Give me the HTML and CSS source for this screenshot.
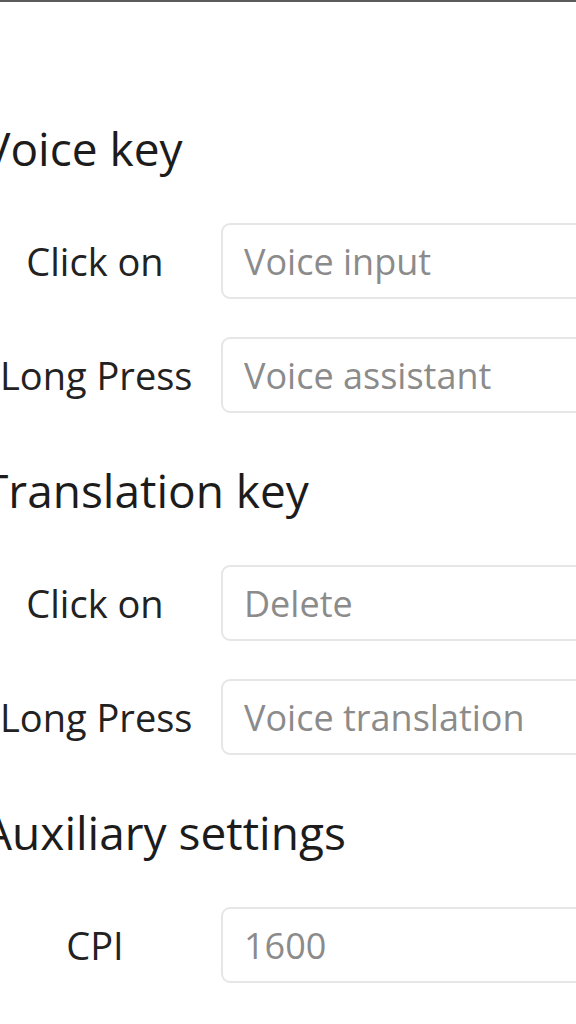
FILE: index.html
```html
<!DOCTYPE html>
<html lang="en">
<head>
<meta charset="utf-8">
<title>Key settings</title>
<link rel="stylesheet" href="styles.css">
</head>
<body>
<div class="topline"></div>
<main class="page">
  <section class="group">
    <h2 class="group-title">Voice key</h2>
    <div class="field">
      <span class="field-label">Click on</span>
      <div class="field-input">Voice input</div>
    </div>
    <div class="field">
      <span class="field-label">Long Press</span>
      <div class="field-input">Voice assistant</div>
    </div>
  </section>
  <section class="group">
    <h2 class="group-title">Translation key</h2>
    <div class="field">
      <span class="field-label">Click on</span>
      <div class="field-input">Delete</div>
    </div>
    <div class="field">
      <span class="field-label">Long Press</span>
      <div class="field-input">Voice translation</div>
    </div>
  </section>
  <section class="group">
    <h2 class="group-title">Auxiliary settings</h2>
    <div class="field">
      <span class="field-label">CPI</span>
      <div class="field-input">1600</div>
    </div>
  </section>
</main>
</body>
</html>
```
FILE: styles.css
```css
html, body {
  margin: 0;
  padding: 0;
  background: #ffffff;
}
body {
  font-family: "Open Sans", "Noto Sans", sans-serif;
  overflow: hidden;
  width: 576px;
  height: 1024px;
}
.topline {
  height: 2px;
  background: #5b5b5b;
}
.page {
  padding-top: 113px;
  display: flex;
  flex-direction: column;
  gap: 44px;
}
.group {
  display: flex;
  flex-direction: column;
  gap: 38px;
}
.group-title {
  margin: 0 0 9px -17px;
  padding-top: 5px;
  font-size: 46px;
  line-height: 56px;
  font-weight: 400;
  color: #1c1c1c;
  white-space: nowrap;
}
.field {
  display: flex;
  align-items: center;
  gap: 31px;
  margin-right: -40px;
}
.field-label {
  width: 190px;
  flex: none;
  text-align: center;
  font-size: 38px;
  color: #222222;
  white-space: nowrap;
}
.field-input {
  flex: 1;
  height: 76px;
  box-sizing: border-box;
  border: 2px solid #e6e6e6;
  border-radius: 9px;
  padding-left: 21px;
  display: flex;
  align-items: center;
  font-size: 36px;
  color: #8b8b8b;
  white-space: nowrap;
}
```
